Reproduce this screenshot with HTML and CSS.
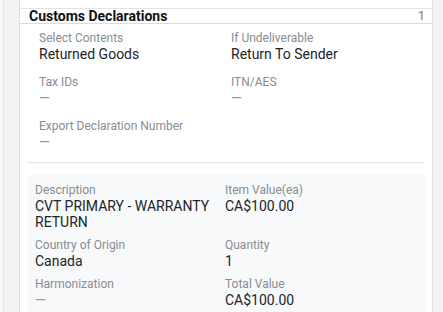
FILE: index.html
```html
<!DOCTYPE html>
<html lang="en">
<head>
    <meta charset="UTF-8">
    <meta name="viewport" content="width=device-width, initial-scale=1.0">
    <title>Customs Declarations</title>
    <link rel="stylesheet" href="styles.css">
</head>
<body>

    <div class="page">
        <div class="card">
            <div class="section-header">
                <span class="section-title">Customs Declarations</span>
                <span class="section-count">1</span>
            </div>

            <div class="fields">
                <div class="field">
                    <div class="label">Select Contents</div>
                    <div class="value">Returned Goods</div>
                </div>
                <div class="field">
                    <div class="label">If Undeliverable</div>
                    <div class="value">Return To Sender</div>
                </div>
                <div class="field">
                    <div class="label">Tax IDs</div>
                    <div class="value empty">&mdash;</div>
                </div>
                <div class="field">
                    <div class="label">ITN/AES</div>
                    <div class="value empty">&mdash;</div>
                </div>
                <div class="field">
                    <div class="label">Export Declaration Number</div>
                    <div class="value empty">&mdash;</div>
                </div>
            </div>

            <hr class="divider">

            <!-- Line items -->
            <div class="item">
                <div class="field">
                    <div class="label">Description</div>
                    <div class="value">CVT PRIMARY - WARRANTY RETURN</div>
                </div>
                <div class="field">
                    <div class="label">Item Value(ea)</div>
                    <div class="value">CA$100.00</div>
                </div>
                <div class="field">
                    <div class="label">Country of Origin</div>
                    <div class="value">Canada</div>
                </div>
                <div class="field">
                    <div class="label">Quantity</div>
                    <div class="value">1</div>
                </div>
                <div class="field">
                    <div class="label">Harmonization</div>
                    <div class="value empty">&mdash;</div>
                </div>
                <div class="field">
                    <div class="label">Total Value</div>
                    <div class="value">CA$100.00</div>
                </div>
            </div>
        </div>
    </div>

</body>
</html>
```

FILE: styles.css
```css
body {
    font-family: Roboto, "Liberation Sans", Arial, sans-serif;
    background-color: #f7f7f8;
    margin: 0;
    padding: 0;
    height: 312px;
    overflow: hidden;
}
.page {
    margin-left: 3px;
    border-left: 1px solid #e4e4e6;
    background-color: #f2f2f3;
    padding: 0 10px 0 15px;
    height: 312px;
}
.card {
    background-color: #fff;
    border-left: 1px solid #dedfe1;
    border-right: 1px solid #dedfe1;
    padding-top: 8px;
    height: 304px;
}
.section-header {
    display: flex;
    justify-content: space-between;
    align-items: center;
    border-top: 1px solid #e2e3e5;
    border-bottom: 1px solid #d9dadc;
    padding: 0 7px 0 9px;
    height: 14px;
    line-height: 14px;
}
.section-title {
    font-size: 14px;
    font-weight: bold;
    color: #111;
}
.section-count {
    font-size: 13px;
    color: #7a7d82;
}
.fields {
    display: grid;
    grid-template-columns: 192px 1fr;
    row-gap: 12px;
    padding: 6px 0 0 19px;
}
.label {
    font-size: 12px;
    line-height: 16px;
    color: #888c92;
}
.value {
    font-size: 14px;
    line-height: 16px;
    color: #212529;
}
.value.empty {
    color: #999ca1;
}
.divider {
    border: none;
    border-top: 1px solid #e3e4e6;
    margin: 12px 7px 12px 7px;
}
.item {
    display: grid;
    grid-template-columns: 190px 1fr;
    row-gap: 7px;
    background-color: #f8f9fa;
    margin: 0 7px 0 8px;
    padding: 7px 0 8px 7px;
}
```
